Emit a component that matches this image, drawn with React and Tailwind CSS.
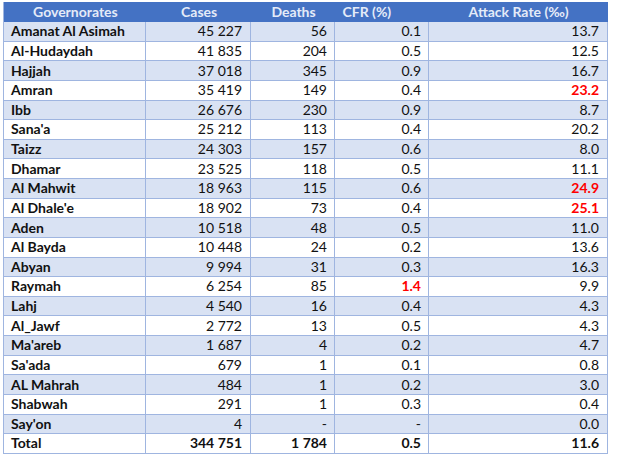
import React from "react";

const rows = [
  ["Amanat Al Asimah", "45 227", "56", "0.1", "13.7"],
  ["Al-Hudaydah", "41 835", "204", "0.5", "12.5"],
  ["Hajjah", "37 018", "345", "0.9", "16.7"],
  ["Amran", "35 419", "149", "0.4", "23.2", false, true],
  ["Ibb", "26 676", "230", "0.9", "8.7"],
  ["Sana'a", "25 212", "113", "0.4", "20.2"],
  ["Taizz", "24 303", "157", "0.6", "8.0"],
  ["Dhamar", "23 525", "118", "0.5", "11.1"],
  ["Al Mahwit", "18 963", "115", "0.6", "24.9", false, true],
  ["Al Dhale'e", "18 902", "73", "0.4", "25.1", false, true],
  ["Aden", "10 518", "48", "0.5", "11.0"],
  ["Al Bayda", "10 448", "24", "0.2", "13.6"],
  ["Abyan", "9 994", "31", "0.3", "16.3"],
  ["Raymah", "6 254", "85", "1.4", "9.9", true, false],
  ["Lahj", "4 540", "16", "0.4", "4.3"],
  ["Al_Jawf", "2 772", "13", "0.5", "4.3"],
  ["Ma'areb", "1 687", "4", "0.2", "4.7"],
  ["Sa'ada", "679", "1", "0.1", "0.8"],
  ["AL Mahrah", "484", "1", "0.2", "3.0"],
  ["Shabwah", "291", "1", "0.3", "0.4"],
  ["Say'on", "4", "-", "-", "0.0"],
];

export default function App() {
  return (
    <div className="w-[618px] h-[459px] bg-white overflow-hidden" style={{ fontFamily: "Lato, 'Open Sans', sans-serif" }}>
      <div className="h-[2px]" />
      <div className="ml-[3px] w-[605px] border-l border-[#9fb5e0] text-[14px] leading-none">
        <div className="flex h-[20px] bg-[#4472c4] text-[#e4ebf8] font-bold">
          <div className="w-[143px] flex items-center justify-center">Governorates</div>
          <div className="w-[105px] flex items-center justify-center">Cases</div>
          <div className="w-[84px] flex items-center justify-center">Deaths</div>
          <div className="w-[94px] flex items-center pl-[7px]">CFR (%)</div>
          <div className="w-[179px] flex items-center justify-center">Attack Rate (‰)</div>
        </div>
        {rows.map((r, i) => (
          <div
            key={i}
            className={`flex h-[19.64px] border-b border-[#9fb5e0] text-[#111] ${i % 2 === 0 ? "bg-[#d9e2f3]" : "bg-white"}`}
          >
            <div className="w-[142px] border-r border-[#9fb5e0] flex items-center pl-[7px] font-bold">{r[0]}</div>
            <div className="w-[105px] border-r border-[#9fb5e0] flex items-center justify-end pr-[8px]">{r[1]}</div>
            <div className="w-[84px] border-r border-[#9fb5e0] flex items-center justify-end pr-[7px]">{r[2]}</div>
            <div className={`w-[94px] border-r border-[#9fb5e0] flex items-center justify-end pr-[7px] ${r[5] ? "text-[#ff0000] font-bold" : ""}`}>{r[3]}</div>
            <div className={`w-[179px] border-r border-[#9fb5e0] flex items-center justify-end pr-[8px] ${r[6] ? "text-[#ff0000] font-bold" : ""}`}>{r[4]}</div>
          </div>
        ))}
        <div className="flex h-[19.64px] border-b border-[#9fb5e0] bg-white text-[#111] font-bold">
          <div className="w-[142px] border-r border-[#9fb5e0] flex items-center pl-[7px]">Total</div>
          <div className="w-[105px] border-r border-[#9fb5e0] flex items-center justify-end pr-[8px]">344 751</div>
          <div className="w-[84px] border-r border-[#9fb5e0] flex items-center justify-end pr-[7px]">1 784</div>
          <div className="w-[94px] border-r border-[#9fb5e0] flex items-center justify-end pr-[7px]">0.5</div>
          <div className="w-[179px] border-r border-[#9fb5e0] flex items-center justify-end pr-[8px]">11.6</div>
        </div>
      </div>
    </div>
  );
}
